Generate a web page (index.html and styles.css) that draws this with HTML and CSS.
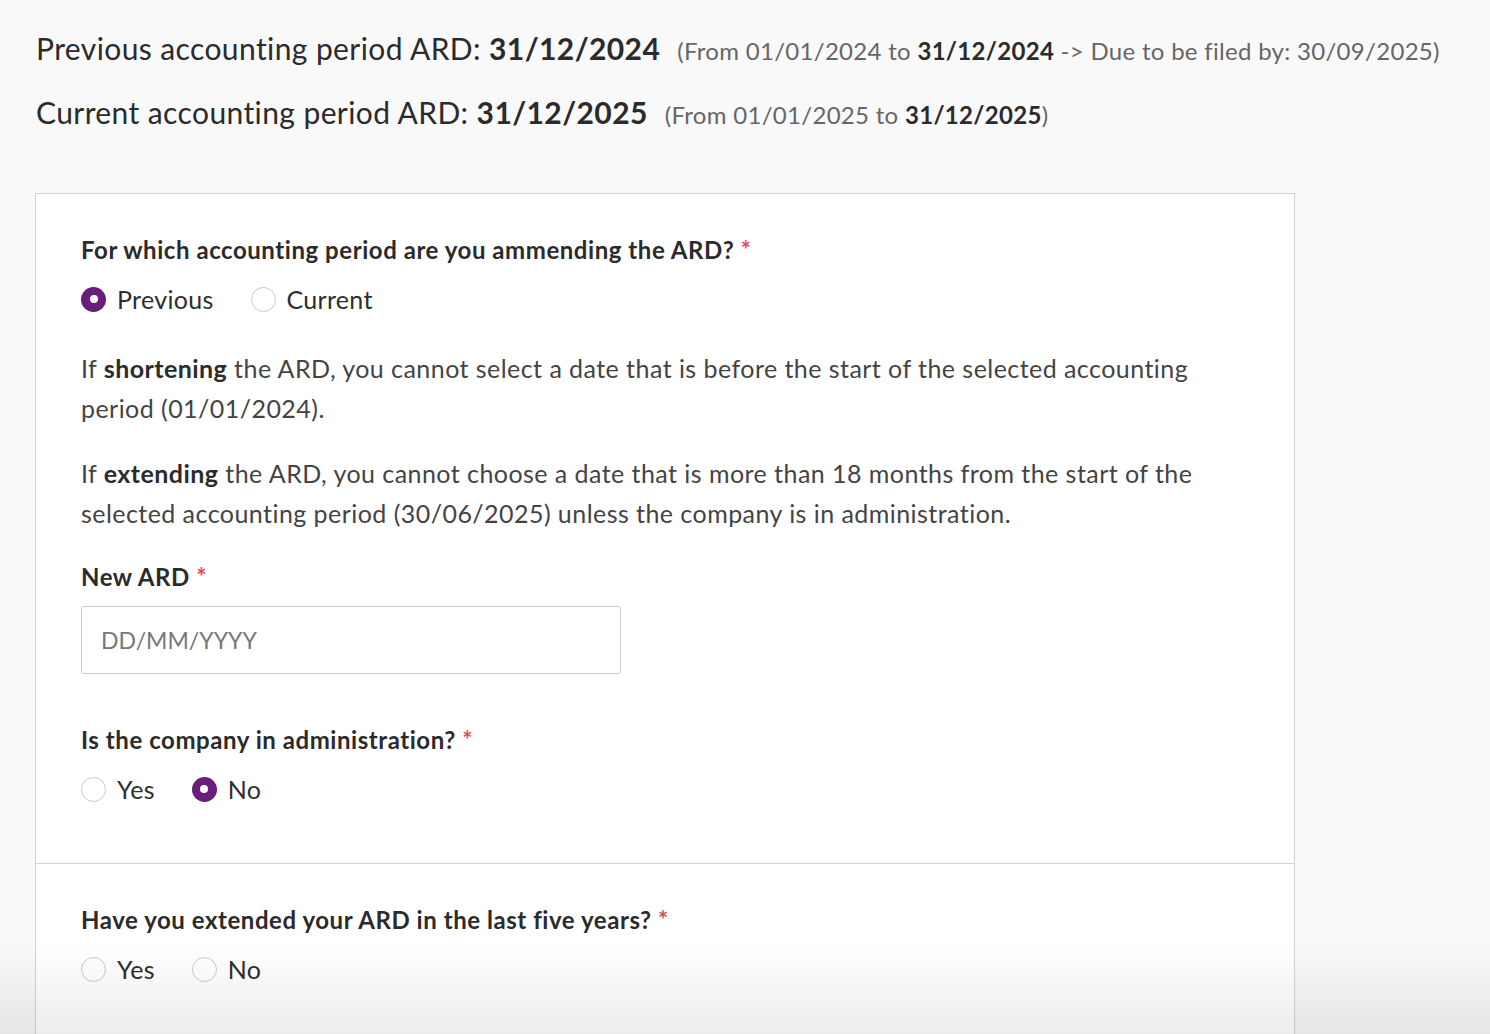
FILE: index.html
```html
<!DOCTYPE html>
<html lang="en">
<head>
<meta charset="utf-8">
<title>Change ARD</title>
<link rel="stylesheet" href="styles.css">
</head>
<body>
<header class="periods">
  <p class="period"><span class="period-main">Previous accounting period ARD: <b>31/12/2024</b></span><span class="period-note">(From 01/01/2024 to <b>31/12/2024</b> -&gt; Due to be filed by: 30/09/2025)</span></p>
  <p class="period period-second"><span class="period-main">Current accounting period ARD: <b>31/12/2025</b></span><span class="period-note">(From 01/01/2025 to <b>31/12/2025</b>)</span></p>
</header>

<main class="card">
  <section class="section">
    <div class="label">For which accounting period are you ammending the ARD? <span class="req">*</span></div>
    <div class="radios">
      <label class="radio"><span class="dot checked"></span>Previous</label>
      <label class="radio"><span class="dot"></span>Current</label>
    </div>
    <p class="info info-first">If <b>shortening</b> the ARD, you cannot select a date that is before the start of the selected accounting period (01/01/2024).</p>
    <p class="info info-second">If <b>extending</b> the ARD, you cannot choose a date that is more than 18 months from the start of the selected accounting period (30/06/2025) unless the company is in administration.</p>
    <div class="label label-ard">New ARD <span class="req">*</span></div>
    <div class="input"><span class="placeholder">DD/MM/YYYY</span></div>
    <div class="label label-admin">Is the company in administration? <span class="req">*</span></div>
    <div class="radios">
      <label class="radio"><span class="dot"></span>Yes</label>
      <label class="radio"><span class="dot checked"></span>No</label>
    </div>
  </section>
  <section class="section">
    <div class="label">Have you extended your ARD in the last five years? <span class="req">*</span></div>
    <div class="radios">
      <label class="radio"><span class="dot"></span>Yes</label>
      <label class="radio"><span class="dot"></span>No</label>
    </div>
  </section>
</main>
<div class="fade"></div>
</body>
</html>
```

FILE: styles.css
```css
html, body {
  margin: 0;
  padding: 0;
  background: #f9f9f9;
  color: #2e2e2e;
  font-family: Lato, "Noto Sans", sans-serif;
  overflow: hidden;
  height: 1034px;
}

.periods {
  padding: 28px 0 0 36px;
}

.period {
  margin: 0;
  line-height: 40px;
  white-space: nowrap;
  display: flex;
  align-items: baseline;
  gap: 17px;
}

.period-second {
  margin-top: 21px;
}

.period-main {
  font-size: 30px;
  letter-spacing: 0.4px;
  color: #2b2b2b;
}

.period-main b {
  font-weight: 700;
}

.period-note {
  font-size: 24px;
  letter-spacing: 0.3px;
  color: #666;
}

.period-note b {
  color: #2b2b2b;
}

.card {
  margin: 58px 0 0 35px;
  width: 1258px;
  background: #fff;
  border: 1px solid #cfd3d8;
  border-bottom: none;
  min-height: 900px;
}

.section {
  padding: 41px 45px 59px;
}

.section + .section {
  border-top: 1px solid #d3d3d3;
}

.label {
  font-size: 24px;
  letter-spacing: 0.55px;
  font-weight: 700;
  line-height: 30px;
  color: #2b2b2b;
}

.req {
  color: #e8455f;
  font-weight: 700;
}

.radios {
  display: flex;
  gap: 37px;
  margin-top: 19px;
  height: 30px;
  align-items: center;
}

.radio {
  display: flex;
  align-items: center;
  gap: 11px;
  font-size: 25px;
  letter-spacing: 0.3px;
  color: #2e2e2e;
}

.dot {
  width: 25px;
  height: 25px;
  border: 1px solid #c8cad6;
  border-radius: 50%;
  background: #fff;
  box-sizing: border-box;
  position: relative;
  flex: none;
}

.dot.checked {
  border: none;
  background: #6a1e7b;
}

.dot.checked::after {
  content: "";
  position: absolute;
  left: 8.5px;
  top: 8.5px;
  width: 8px;
  height: 8px;
  border-radius: 50%;
  background: #fff;
}

.info {
  margin: 0;
  font-size: 25px;
  letter-spacing: 0.45px;
  line-height: 40px;
  color: #444;
  max-width: 1130px;
}

.info b {
  color: #2b2b2b;
}

.info-first {
  margin-top: 34px;
}

.info-second {
  margin-top: 25px;
}

.label-ard {
  margin-top: 29px;
}

.input {
  margin-top: 14px;
  width: 540px;
  height: 68px;
  box-sizing: border-box;
  border: 1px solid #cccccc;
  border-radius: 3px;
  display: flex;
  align-items: center;
  padding-left: 19px;
  background: #fff;
}

.placeholder {
  font-size: 23px;
  color: #777;
}

.label-admin {
  margin-top: 51px;
}

.fade {
  position: fixed;
  left: 0;
  right: 0;
  bottom: 0;
  height: 90px;
  background: linear-gradient(to bottom, rgba(0,0,0,0), rgba(0,0,0,0.075));
  pointer-events: none;
}
```
